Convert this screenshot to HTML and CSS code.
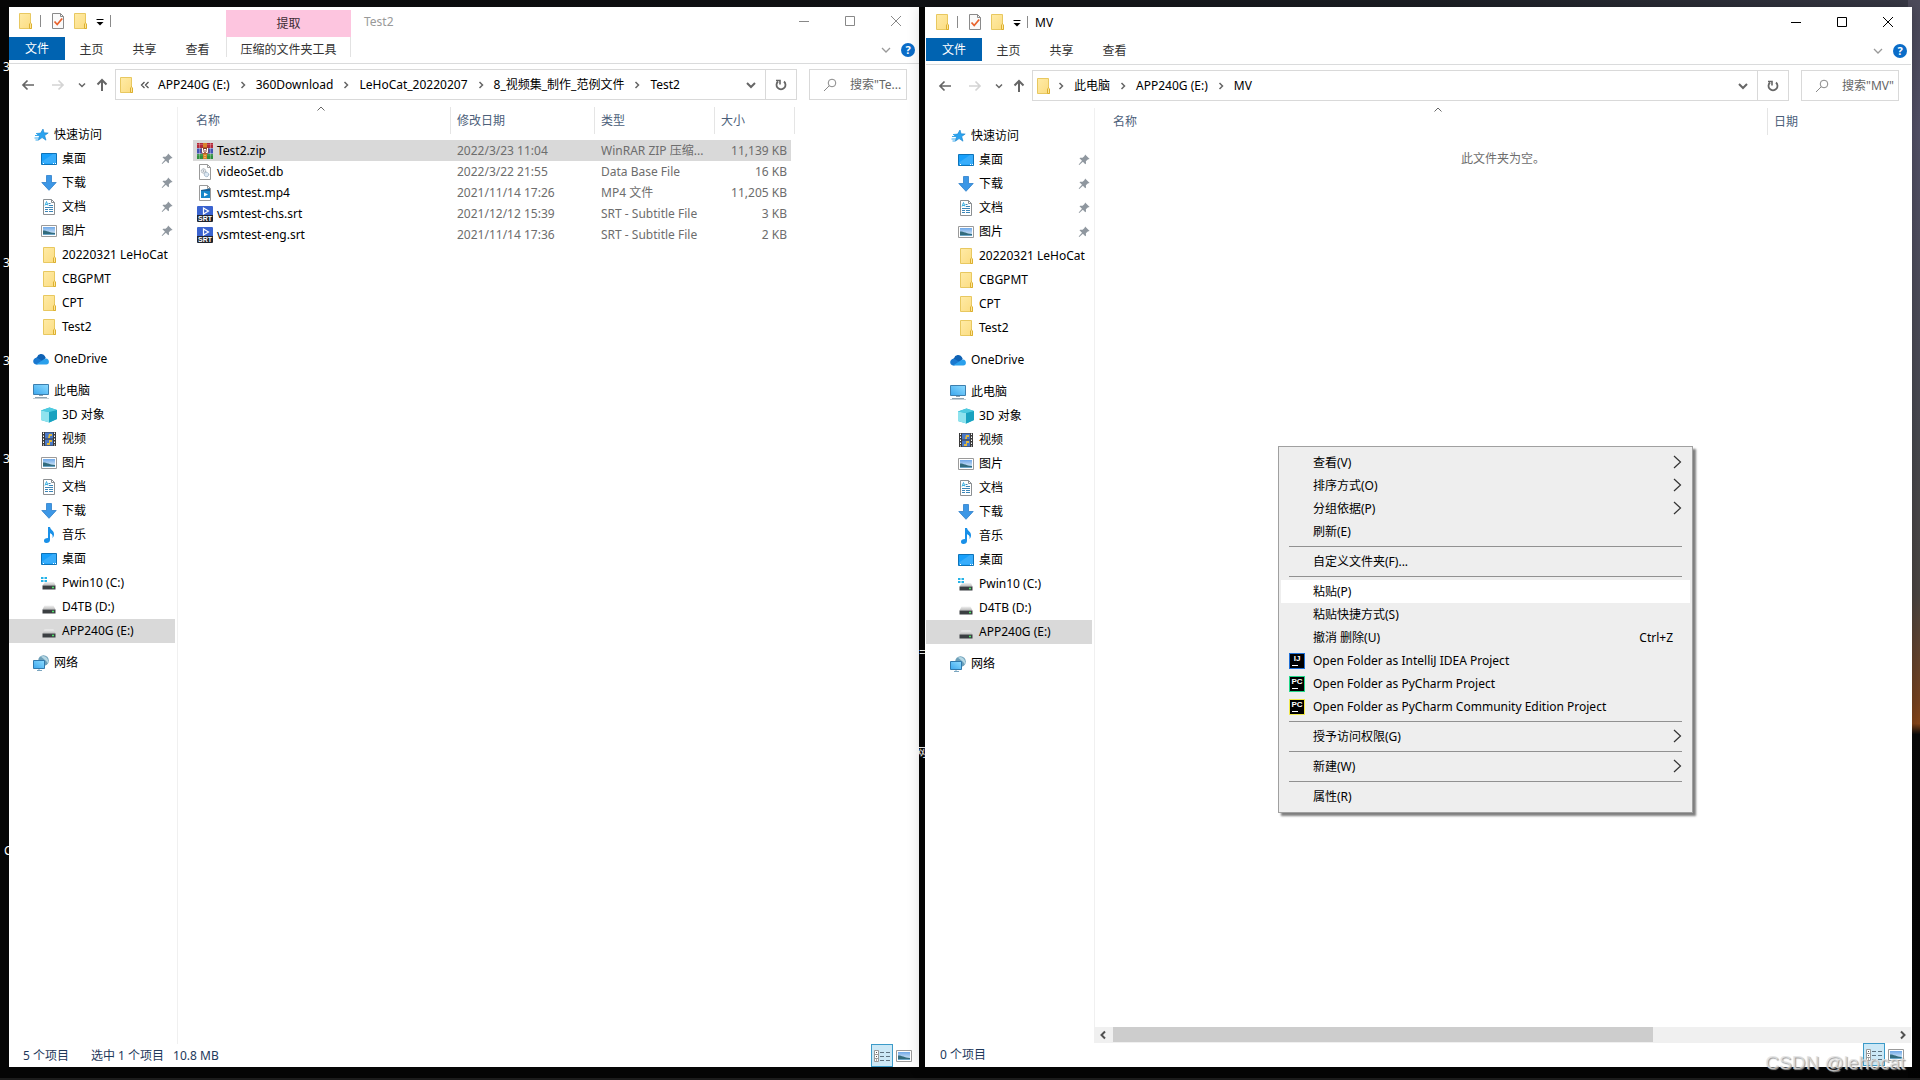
FILE: index.html
```html
<!DOCTYPE html>
<html lang="zh-CN">
<head>
    <meta charset="UTF-8">
    <meta name="viewport" content="width=device-width, initial-scale=1.0">
    <title>文件资源管理器</title>
    <link rel="stylesheet" href="styles.css">
</head>
<body>
    <!-- shared icons -->
    <svg class="sprite" width="0" height="0" aria-hidden="true">
        <defs>
            <linearGradient id="gFolder" x1="0" y1="0" x2="1" y2="1"><stop offset="0" stop-color="#ffeba6"/><stop offset="1" stop-color="#fbdc81"/></linearGradient>
            <linearGradient id="gScreen" x1="0" y1="1" x2="1" y2="0"><stop offset="0" stop-color="#3ba7ee"/><stop offset="1" stop-color="#8fdcff"/></linearGradient>
            <linearGradient id="gSky" x1="0" y1="0" x2="0" y2="1"><stop offset="0" stop-color="#6fa8e8"/><stop offset="1" stop-color="#e9f4fb"/></linearGradient>
            <linearGradient id="gDrive" x1="0" y1="0" x2="0" y2="1"><stop offset="0" stop-color="#f2f2f2"/><stop offset="1" stop-color="#b9b9b9"/></linearGradient>
        </defs>
        <symbol id="folder" viewBox="0 0 16 16"><path d="M2.500.5h11v11.200l1 .3v3.500h-12z" fill="url(#gFolder)" stroke="#e8c860"/><path d="M12.500 15.500v-4.700l1-.9 1 .9v4.700z" fill="#ffe69a" stroke="#dcb030"/></symbol>
        <symbol id="check" viewBox="0 0 16 16"><path d="M2.500.5h8l3 3v12h-11z" fill="#fafafa" stroke="#8a8a8a"/><path d="M10.500.5v3h3" fill="none" stroke="#8a8a8a"/><path d="M4.500 8.500l2.700 3 5-6" fill="none" stroke="#e8622c" stroke-width="1.800"/></symbol>
        <symbol id="star" viewBox="0 0 16 16"><path d="M10 2l1.100 3.800 4.100.2-3.500 2.600 1.300 4.600-3.900-2.600-3.800 2.600 1.200-4.300L3.300 6.500l4.300-.4z" fill="#2ba3ef" stroke="#1681cb" stroke-width=".6"/><path d="M3 6.500h3M2 8.500h4M1.500 11h4.500M2.500 13h2.500" stroke="#39a9ec"/></symbol>
        <symbol id="desktop" viewBox="0 0 16 16"><path d="M.5 2.500h15v11h-15z" fill="#18a0fb" stroke="#0e73b8"/><path d="M1 10.500L12 3h3v9.500H1z" fill="#38adfb"/><path d="M2 12.500h1M12 12.500h1M14 12.500h1" stroke="#fff"/></symbol>
        <symbol id="download" viewBox="0 0 16 16"><path d="M5.500.5h5v7h4.700L8 15.300.8 7.500h4.700z" fill="#3c97e6" stroke="#2d7fca" stroke-width=".8"/></symbol>
        <symbol id="doc" viewBox="0 0 16 16"><path d="M2.500.5h8l3 3v12h-11z" fill="#fff" stroke="#8b8f92"/><path d="M10.500.5v3h3" fill="none" stroke="#8b8f92"/><path d="M4 8.500h8M4 10.500h3M8 10.500h4M4 12.500h3M8 12.500h4M8 6.500h4" stroke="#3c86b8"/><path d="M4 6.500l1.500-4 1.500 4M4.500 5.500h2" fill="none" stroke="#38aee0"/><path d="M7.500 4.500h2" stroke="#3c86b8"/></symbol>
        <symbol id="picture" viewBox="0 0 16 16"><path d="M.5 2.500h15v11h-15z" fill="#fff" stroke="#9a9a9a"/><path d="M2 4h12v8H2z" fill="url(#gSky)"/><path d="M2 7.500c4 0 6 2 12 2.500v2H2z" fill="#336c7d"/><path d="M2 11h12v1H2z" fill="#6ba6c8"/></symbol>
        <symbol id="pin" viewBox="0 0 16 16"><path d="M9.500.5l6 6-1.500.6-1 .2-2.500 2.500.2 3-1 .8-3.200-3.200L1.700 14.500l-.8-.6 4.400-4.900L2 5.800 2.800 5l3.300.1L8.700 2.500z" fill="#8f979f"/></symbol>
        <symbol id="onedrive" viewBox="0 0 16 16"><path d="M4 6.200A4.300 4.300 0 0 1 11.800 5l1 2L8 12H3.500A3.200 3.200 0 0 1 4 6.200z" fill="#0f62b5"/><path d="M.2 10A3.200 3.200 0 0 1 4.500 7l6 3.500L4 13.400H3A3.300 3.300 0 0 1 .2 10z" fill="#1a78cf"/><path d="M3 13.400l8-5.200c2.500-1.800 5-.1 4.900 2.500a2.700 2.700 0 0 1-2.800 2.700z" fill="#2aa0ec"/></symbol>
        <symbol id="pc" viewBox="0 0 16 16"><path d="M.5 1.500h15v10H.5z" fill="url(#gScreen)" stroke="#3d7fae"/><path d="M6 12.500h4" stroke="#8fa3b0"/><path d="M2 14.500h12" stroke="#8fa3b0"/><path d="M0 15.500h16" stroke="#c5ced4"/></symbol>
        <symbol id="cube" viewBox="0 0 16 16"><path d="M0 3.500L8.500.5 16 3v9l-7.500 3.500L0 13z" fill="#24b4cf"/><path d="M0 3.500l8 1.500v10.500L0 13z" fill="#8fe3ee"/><path d="M8 5l8-2v9l-8 3.500z" fill="#19a2c0"/><path d="M0 3.500L8.500.5 16 3 8 5z" fill="#4ecbe0"/></symbol>
        <symbol id="video" viewBox="0 0 16 16"><path d="M1 1h14v14H1z" fill="#3a3a3a"/><path d="M4 1.500h8v6H4z" fill="#4a79c9"/><path d="M4 8.500h8v6H4z" fill="#4a79c9"/><path d="M8 3h3v2H9v2H7zM8 9h3v2H9v3H6v-2h2z" fill="#e3b93c"/><path d="M2.500 1.500v13M13.500 1.500v13" stroke="#fff" stroke-dasharray="1.500 1.500"/></symbol>
        <symbol id="music" viewBox="0 0 16 16"><path d="M7 0h2c.5 3 4.300 3.500 4 7.500 0 1.500-.6 2.600-1.600 3.700.9-3-.4-4.300-2.400-5V13c0 1.700-1.500 3-3.600 3S3 15 3 13.600 4.400 11 7 11z" fill="#1990e8"/></symbol>
        <symbol id="drive" viewBox="0 0 16 16"><path d="M3.500 6.500h9l2 4h-13z" fill="url(#gDrive)"/><path d="M1.500 10.500h13v4h-13z" fill="#3b3f42"/><path d="M11 12.500h2" stroke="#4fe36a" stroke-width="1.500"/></symbol>
        <symbol id="windrive" viewBox="0 0 16 16"><path d="M4 7h9l1.500 3.500h-13z" fill="url(#gDrive)"/><path d="M1.500 10.500h13v4h-13z" fill="#3b3f42"/><path d="M11 12.500h2" stroke="#4fe36a" stroke-width="1.500"/><path d="M0 2h2.500v2H0zM3.500 2H6v2H3.500zM0 5h2.500v2H0zM3.500 5H6v2H3.500z" fill="#24b3e8"/></symbol>
        <symbol id="network" viewBox="0 0 16 16"><circle cx="10.500" cy="5.500" r="5.300" fill="#6c9fb8"/><path d="M7 2c3 0 3 2 5 3s2 3 3 3c1-4-2-7-5-7z" fill="#b5d7e4"/><path d="M.5 5.500h11v8H.5z" fill="url(#gScreen)" stroke="#3079ad"/><path d="M4 15.500h5M6 14v1" stroke="#7ba6c0"/></symbol>
        <symbol id="rar" viewBox="0 0 16 16"><path d="M0 0h16v5H0z" fill="#b52a3a"/><path d="M0 5.500h16v5H0z" fill="#4353b5"/><path d="M0 11h16v5H0z" fill="#2f8f3d"/><path d="M0 1.500h16M0 12h16" stroke="#fff" stroke-opacity=".2"/><path d="M2.500 0v16M13.500 0v16" stroke="#fff" stroke-opacity=".3"/><path d="M6 0h4v16H6z" fill="#d8832c"/><path d="M4.500 4.500h7v6h-7z" fill="#8a3b26"/><path d="M5.500 5v4.500h1.500V6.500h2v3h1.500V5" fill="none" stroke="#fff"/><path d="M8 12v3" stroke="#ffe08a" stroke-dasharray="1 1"/></symbol>
        <symbol id="db" viewBox="0 0 16 16"><path d="M2.500.5h8l3 3v12h-11z" fill="#fff" stroke="#9a9a9a"/><path d="M10.500.5v3h3" fill="none" stroke="#9a9a9a"/><circle cx="6.500" cy="7" r="2.200" fill="#e9edf0" stroke="#8d979f" stroke-dasharray="1 .5"/><circle cx="6.500" cy="7" r=".7" fill="#8d979f"/><circle cx="9.500" cy="10.500" r="2.200" fill="#dbe7f2" stroke="#8ba4ba" stroke-dasharray="1 .5"/></symbol>
        <symbol id="mp4" viewBox="0 0 16 16"><path d="M2.500.5h8l3 3v12h-11z" fill="#fff" stroke="#9a9a9a"/><path d="M10.500.5v3h3" fill="none" stroke="#9a9a9a"/><path d="M4 5l9-1.500V6H4z" fill="#1b5f93"/><path d="M4 6h9v7H4z" fill="#1787c9"/><path d="M7 7.500l4 2-4 2z" fill="#fff"/></symbol>
        <symbol id="play" viewBox="0 0 8 8"><path d="M1.500 1l5 3-5 3z" fill="none" stroke="#fff" stroke-width="1.200"/></symbol>
        <symbol id="details" viewBox="0 0 16 16"><path d="M.5 2.500h4v11h-4zM.5 6.500h4M.5 10.500h4" fill="#fff" stroke="#9a9a9a"/><path d="M2 4.500h1M2 8.500h1M2 12h1" stroke="#555"/><path d="M6 4.500h4M12 4.500h4M6 8.500h4M12 8.500h4M6 12.500h4M12 12.500h4" stroke="#5e7280"/></symbol>
        <symbol id="back" viewBox="0 0 16 16"><path d="M14 8H3M7.500 3.500L3 8l4.500 4.500" fill="none" stroke="currentColor" stroke-width="1.700"/></symbol>
        <symbol id="forward" viewBox="0 0 16 16"><path d="M2 8h11M8.500 3.500L13 8l-4.500 4.500" fill="none" stroke="currentColor" stroke-width="1.700"/></symbol>
        <symbol id="up" viewBox="0 0 16 16"><path d="M8 14V3M3.500 7.500L8 3l4.500 4.500" fill="none" stroke="currentColor" stroke-width="2"/></symbol>
        <symbol id="down" viewBox="0 0 16 16"><path d="M4 6l4 4 4-4" fill="none" stroke="currentColor" stroke-width="2"/></symbol>
        <symbol id="thindown" viewBox="0 0 16 16"><path d="M4 6l4 4 4-4" fill="none" stroke="currentColor" stroke-width="1.300"/></symbol>
        <symbol id="smalldown" viewBox="0 0 16 16"><path d="M5 6.500l3 3 3-3" fill="none" stroke="currentColor" stroke-width="1.500"/></symbol>
        <symbol id="right" viewBox="0 0 16 16"><path d="M6.500 5l3 3-3 3" fill="none" stroke="currentColor" stroke-width="1.500"/></symbol>
        <symbol id="left" viewBox="0 0 16 16"><path d="M10 4.500L6.500 8l3.500 3.500" fill="none" stroke="currentColor" stroke-width="2"/></symbol>
        <symbol id="next" viewBox="0 0 16 16"><path d="M6 4.500L9.500 8 6 11.500" fill="none" stroke="currentColor" stroke-width="2"/></symbol>
        <symbol id="more" viewBox="0 0 16 16"><path d="M7.500 5l-3 3 3 3M11.500 5l-3 3 3 3" fill="none" stroke="currentColor" stroke-width="1.300"/></symbol>
        <symbol id="refresh" viewBox="0 0 16 16"><path d="M11 4.500a4.500 4.500 0 1 1-6 0" fill="none" stroke="currentColor" stroke-width="1.800"/><path d="M3 3.500h4v4" fill="none" stroke="currentColor" stroke-width="1.600"/></symbol>
        <symbol id="search" viewBox="0 0 16 16"><circle cx="10" cy="6" r="3.800" fill="none" stroke="currentColor"/><path d="M7.200 8.800L2 14" stroke="currentColor"/></symbol>
        <symbol id="qat" viewBox="0 0 16 16"><path d="M4.500 6.500h7" stroke="#000"/><path d="M4.500 9h7L8 12.500z" fill="#000"/></symbol>
        <symbol id="sort" viewBox="0 0 16 16"><path d="M4.500 9.500L8 6l3.500 3.500" fill="none" stroke="currentColor"/></symbol>
        <symbol id="min" viewBox="0 0 16 16"><path d="M3 8.500h10" stroke="currentColor"/></symbol>
        <symbol id="max" viewBox="0 0 16 16"><path d="M3.500 3.500h9v9h-9z" fill="none" stroke="currentColor"/></symbol>
        <symbol id="close" viewBox="0 0 16 16"><path d="M3 3l10 10M13 3L3 13" stroke="currentColor"/></symbol>
        <symbol id="submenu" viewBox="0 0 16 16"><path d="M6 1l6.500 6L6 13" fill="none" stroke="currentColor" stroke-width="1.200"/></symbol>
    </svg>

    <!-- desktop icon labels that peek out behind the windows -->
    <div class="desktop-labels" aria-hidden="true">
        <span class="label label-1">3</span>
        <span class="label label-2">3</span>
        <span class="label label-3">3</span>
        <span class="label label-4">3</span>
        <span class="label label-5">C</span>
        <span class="label label-6">=</span>
        <span class="label label-7">网</span>
    </div>

    <main class="desktop">
        <section class="window inactive">
            <header class="titlebar">
                <div class="quick-bar">
                    <svg class="icon"><use href="#folder"/></svg>
                    <span class="bar"></span>
                    <button aria-label="属性"><svg class="icon"><use href="#check"/></svg></button>
                    <button aria-label="新建文件夹"><svg class="icon"><use href="#folder"/></svg></button>
                    <button aria-label="自定义快速访问工具栏"><svg class="icon"><use href="#qat"/></svg></button>
                    <span class="bar"></span>
                </div>
                <span class="tool-group">提取</span>
                <h1 class="title">Test2</h1>
                <div class="controls">
                    <button aria-label="最小化"><svg class="icon"><use href="#min"/></svg></button>
                    <button aria-label="最大化"><svg class="icon"><use href="#max"/></svg></button>
                    <button aria-label="关闭"><svg class="icon"><use href="#close"/></svg></button>
                </div>
            </header>
            <div class="ribbon">
                <button class="tab file">文件</button>
                <button class="tab">主页</button>
                <button class="tab">共享</button>
                <button class="tab">查看</button>
                <button class="tab tool">压缩的文件夹工具</button>
                <button class="expand" aria-label="展开功能区"><svg class="icon"><use href="#thindown"/></svg></button>
                <button class="help">?</button>
            </div>
            <div class="address-row">
                <div class="history">
                    <button aria-label="返回"><svg class="icon"><use href="#back"/></svg></button>
                    <button class="disabled" aria-label="前进"><svg class="icon"><use href="#forward"/></svg></button>
                    <button class="small" aria-label="最近浏览的位置"><svg class="icon"><use href="#smalldown"/></svg></button>
                    <button aria-label="上移"><svg class="icon"><use href="#up"/></svg></button>
                </div>
                <div class="address">
                    <svg class="icon"><use href="#folder"/></svg>
                    <svg class="icon more"><use href="#more"/></svg>
                    <nav class="crumbs">
                        <a href="#">APP240G (E:)</a>
                        <svg class="icon"><use href="#right"/></svg>
                        <a href="#">360Download</a>
                        <svg class="icon"><use href="#right"/></svg>
                        <a href="#">LeHoCat_20220207</a>
                        <svg class="icon"><use href="#right"/></svg>
                        <a href="#">8_视频集_制作_范例文件</a>
                        <svg class="icon"><use href="#right"/></svg>
                        <a href="#">Test2</a>
                    </nav>
                    <button class="drop" aria-label="以前的位置"><svg class="icon"><use href="#down"/></svg></button>
                    <button class="refresh" aria-label="刷新"><svg class="icon"><use href="#refresh"/></svg></button>
                </div>
                <label class="search">
                    <svg class="icon"><use href="#search"/></svg>
                    <input type="text" aria-label="搜索" placeholder='搜索"Te...'>
                </label>
            </div>
            <div class="body">
                <nav class="tree">
                    <ul>
                        <li><a href="#" class="root"><svg class="icon"><use href="#star"/></svg>快速访问</a></li>
                        <li><a href="#"><svg class="icon"><use href="#desktop"/></svg>桌面<svg class="pin"><use href="#pin"/></svg></a></li>
                        <li><a href="#"><svg class="icon"><use href="#download"/></svg>下载<svg class="pin"><use href="#pin"/></svg></a></li>
                        <li><a href="#"><svg class="icon"><use href="#doc"/></svg>文档<svg class="pin"><use href="#pin"/></svg></a></li>
                        <li><a href="#"><svg class="icon"><use href="#picture"/></svg>图片<svg class="pin"><use href="#pin"/></svg></a></li>
                        <li><a href="#"><svg class="icon"><use href="#folder"/></svg>20220321 LeHoCat</a></li>
                        <li><a href="#"><svg class="icon"><use href="#folder"/></svg>CBGPMT</a></li>
                        <li><a href="#"><svg class="icon"><use href="#folder"/></svg>CPT</a></li>
                        <li><a href="#"><svg class="icon"><use href="#folder"/></svg>Test2</a></li>
                    </ul>
                    <ul>
                        <li><a href="#" class="root"><svg class="icon"><use href="#onedrive"/></svg>OneDrive</a></li>
                    </ul>
                    <ul>
                        <li><a href="#" class="root"><svg class="icon"><use href="#pc"/></svg>此电脑</a></li>
                        <li><a href="#"><svg class="icon"><use href="#cube"/></svg>3D 对象</a></li>
                        <li><a href="#"><svg class="icon"><use href="#video"/></svg>视频</a></li>
                        <li><a href="#"><svg class="icon"><use href="#picture"/></svg>图片</a></li>
                        <li><a href="#"><svg class="icon"><use href="#doc"/></svg>文档</a></li>
                        <li><a href="#"><svg class="icon"><use href="#download"/></svg>下载</a></li>
                        <li><a href="#"><svg class="icon"><use href="#music"/></svg>音乐</a></li>
                        <li><a href="#"><svg class="icon"><use href="#desktop"/></svg>桌面</a></li>
                        <li><a href="#"><svg class="icon"><use href="#windrive"/></svg>Pwin10 (C:)</a></li>
                        <li><a href="#"><svg class="icon"><use href="#drive"/></svg>D4TB (D:)</a></li>
                        <li><a href="#" class="selected"><svg class="icon"><use href="#drive"/></svg>APP240G (E:)</a></li>
                    </ul>
                    <ul>
                        <li><a href="#" class="root"><svg class="icon"><use href="#network"/></svg>网络</a></li>
                    </ul>
                </nav>
                <div class="content">
                    <table class="files">
                        <colgroup><col class="col-name"><col class="col-date"><col class="col-type"><col class="col-size"></colgroup>
                        <thead>
                            <tr>
                                <th>名称<svg class="sort"><use href="#sort"/></svg></th>
                                <th>修改日期</th>
                                <th>类型</th>
                                <th>大小</th>
                            </tr>
                        </thead>
                        <tbody>
                            <tr class="selected">
                                <td><span class="name"><svg class="icon"><use href="#rar"/></svg>Test2.zip</span></td>
                                <td>2022/3/23 11:04</td><td>WinRAR ZIP 压缩...</td><td>11,139 KB</td>
                            </tr>
                            <tr>
                                <td><span class="name"><svg class="icon"><use href="#db"/></svg>videoSet.db</span></td>
                                <td>2022/3/22 21:55</td><td>Data Base File</td><td>16 KB</td>
                            </tr>
                            <tr>
                                <td><span class="name"><svg class="icon"><use href="#mp4"/></svg>vsmtest.mp4</span></td>
                                <td>2021/11/14 17:26</td><td>MP4 文件</td><td>11,205 KB</td>
                            </tr>
                            <tr>
                                <td><span class="name"><span class="srt"><svg><use href="#play"/></svg>SRT</span>vsmtest-chs.srt</span></td>
                                <td>2021/12/12 15:39</td><td>SRT - Subtitle File</td><td>3 KB</td>
                            </tr>
                            <tr>
                                <td><span class="name"><span class="srt"><svg><use href="#play"/></svg>SRT</span>vsmtest-eng.srt</span></td>
                                <td>2021/11/14 17:36</td><td>SRT - Subtitle File</td><td>2 KB</td>
                            </tr>
                        </tbody>
                    </table>
                </div>
            </div>
            <footer class="status">
                <span class="count">5 个项目</span>
                <span class="count">选中 1 个项目</span>
                <span class="count">10.8 MB</span>
                <div class="views">
                    <button class="active" aria-label="详细信息"><svg class="icon"><use href="#details"/></svg></button>
                    <button aria-label="大缩略图"><svg class="icon"><use href="#picture"/></svg></button>
                </div>
            </footer>
        </section>

        <section class="window active">
            <header class="titlebar">
                <div class="quick-bar">
                    <svg class="icon"><use href="#folder"/></svg>
                    <span class="bar"></span>
                    <button aria-label="属性"><svg class="icon"><use href="#check"/></svg></button>
                    <button aria-label="新建文件夹"><svg class="icon"><use href="#folder"/></svg></button>
                    <button aria-label="自定义快速访问工具栏"><svg class="icon"><use href="#qat"/></svg></button>
                    <span class="bar"></span>
                </div>
                <h1 class="title">MV</h1>
                <div class="controls">
                    <button aria-label="最小化"><svg class="icon"><use href="#min"/></svg></button>
                    <button aria-label="最大化"><svg class="icon"><use href="#max"/></svg></button>
                    <button aria-label="关闭"><svg class="icon"><use href="#close"/></svg></button>
                </div>
            </header>
            <div class="ribbon">
                <button class="tab file">文件</button>
                <button class="tab">主页</button>
                <button class="tab">共享</button>
                <button class="tab">查看</button>
                <button class="expand" aria-label="展开功能区"><svg class="icon"><use href="#thindown"/></svg></button>
                <button class="help">?</button>
            </div>
            <div class="address-row">
                <div class="history">
                    <button aria-label="返回"><svg class="icon"><use href="#back"/></svg></button>
                    <button class="disabled" aria-label="前进"><svg class="icon"><use href="#forward"/></svg></button>
                    <button class="small" aria-label="最近浏览的位置"><svg class="icon"><use href="#smalldown"/></svg></button>
                    <button aria-label="上移"><svg class="icon"><use href="#up"/></svg></button>
                </div>
                <div class="address">
                    <svg class="icon"><use href="#folder"/></svg>
                    <nav class="crumbs">
                        <svg class="icon"><use href="#right"/></svg>
                        <a href="#">此电脑</a>
                        <svg class="icon"><use href="#right"/></svg>
                        <a href="#">APP240G (E:)</a>
                        <svg class="icon"><use href="#right"/></svg>
                        <a href="#">MV</a>
                    </nav>
                    <button class="drop" aria-label="以前的位置"><svg class="icon"><use href="#down"/></svg></button>
                    <button class="refresh" aria-label="刷新"><svg class="icon"><use href="#refresh"/></svg></button>
                </div>
                <label class="search">
                    <svg class="icon"><use href="#search"/></svg>
                    <input type="text" aria-label="搜索" placeholder='搜索"MV"'>
                </label>
            </div>
            <div class="body">
                <nav class="tree">
                    <ul>
                        <li><a href="#" class="root"><svg class="icon"><use href="#star"/></svg>快速访问</a></li>
                        <li><a href="#"><svg class="icon"><use href="#desktop"/></svg>桌面<svg class="pin"><use href="#pin"/></svg></a></li>
                        <li><a href="#"><svg class="icon"><use href="#download"/></svg>下载<svg class="pin"><use href="#pin"/></svg></a></li>
                        <li><a href="#"><svg class="icon"><use href="#doc"/></svg>文档<svg class="pin"><use href="#pin"/></svg></a></li>
                        <li><a href="#"><svg class="icon"><use href="#picture"/></svg>图片<svg class="pin"><use href="#pin"/></svg></a></li>
                        <li><a href="#"><svg class="icon"><use href="#folder"/></svg>20220321 LeHoCat</a></li>
                        <li><a href="#"><svg class="icon"><use href="#folder"/></svg>CBGPMT</a></li>
                        <li><a href="#"><svg class="icon"><use href="#folder"/></svg>CPT</a></li>
                        <li><a href="#"><svg class="icon"><use href="#folder"/></svg>Test2</a></li>
                    </ul>
                    <ul>
                        <li><a href="#" class="root"><svg class="icon"><use href="#onedrive"/></svg>OneDrive</a></li>
                    </ul>
                    <ul>
                        <li><a href="#" class="root"><svg class="icon"><use href="#pc"/></svg>此电脑</a></li>
                        <li><a href="#"><svg class="icon"><use href="#cube"/></svg>3D 对象</a></li>
                        <li><a href="#"><svg class="icon"><use href="#video"/></svg>视频</a></li>
                        <li><a href="#"><svg class="icon"><use href="#picture"/></svg>图片</a></li>
                        <li><a href="#"><svg class="icon"><use href="#doc"/></svg>文档</a></li>
                        <li><a href="#"><svg class="icon"><use href="#download"/></svg>下载</a></li>
                        <li><a href="#"><svg class="icon"><use href="#music"/></svg>音乐</a></li>
                        <li><a href="#"><svg class="icon"><use href="#desktop"/></svg>桌面</a></li>
                        <li><a href="#"><svg class="icon"><use href="#windrive"/></svg>Pwin10 (C:)</a></li>
                        <li><a href="#"><svg class="icon"><use href="#drive"/></svg>D4TB (D:)</a></li>
                        <li><a href="#" class="selected"><svg class="icon"><use href="#drive"/></svg>APP240G (E:)</a></li>
                    </ul>
                    <ul>
                        <li><a href="#" class="root"><svg class="icon"><use href="#network"/></svg>网络</a></li>
                    </ul>
                </nav>
                <div class="content">
                    <table class="files wide">
                        <colgroup><col><col class="col-date"></colgroup>
                        <thead>
                            <tr>
                                <th>名称<svg class="sort"><use href="#sort"/></svg></th>
                                <th>日期</th>
                            </tr>
                        </thead>
                    </table>
                    <p class="empty">此文件夹为空。</p>
                    <div class="scrollbar">
                        <button aria-label="向左滚动"><svg class="icon"><use href="#left"/></svg></button>
                        <div class="track"><div class="thumb"></div></div>
                        <button aria-label="向右滚动"><svg class="icon"><use href="#next"/></svg></button>
                    </div>
                </div>
            </div>
            <footer class="status">
                <span class="count">0 个项目</span>
                <div class="views">
                    <button class="active" aria-label="详细信息"><svg class="icon"><use href="#details"/></svg></button>
                    <button aria-label="大缩略图"><svg class="icon"><use href="#picture"/></svg></button>
                </div>
            </footer>
        </section>
    </main>

    <div class="context-menu" role="menu">
        <button role="menuitem">查看(V)<svg class="icon arrow"><use href="#submenu"/></svg></button>
        <button role="menuitem">排序方式(O)<svg class="icon arrow"><use href="#submenu"/></svg></button>
        <button role="menuitem">分组依据(P)<svg class="icon arrow"><use href="#submenu"/></svg></button>
        <button role="menuitem">刷新(E)</button>
        <hr>
        <button role="menuitem">自定义文件夹(F)...</button>
        <hr>
        <button role="menuitem" class="hover">粘贴(P)</button>
        <button role="menuitem">粘贴快捷方式(S)</button>
        <button role="menuitem">撤消 删除(U)<span class="shortcut">Ctrl+Z</span></button>
        <button role="menuitem" class="with-icon"><span class="app idea">IJ</span>Open Folder as IntelliJ IDEA Project</button>
        <button role="menuitem" class="with-icon"><span class="app pycharm">PC</span>Open Folder as PyCharm Project</button>
        <button role="menuitem" class="with-icon"><span class="app community">PC</span>Open Folder as PyCharm Community Edition Project</button>
        <hr>
        <button role="menuitem">授予访问权限(G)<svg class="icon arrow"><use href="#submenu"/></svg></button>
        <hr>
        <button role="menuitem">新建(W)<svg class="icon arrow"><use href="#submenu"/></svg></button>
        <hr>
        <button role="menuitem">属性(R)</button>
    </div>

    <div class="watermark">CSDN @lehocat</div>
</body>
</html>
```

FILE: styles.css
```css
* {
    box-sizing: border-box;
}

body {
    margin: 0;
    min-height: 100vh;
    position: relative;
    overflow: hidden;
    font-family: "Noto Sans", "Noto Sans CJK SC", sans-serif;
    font-size: 12px;
    line-height: 16px;
    color: #000;
    background:
        linear-gradient(#1c1c1c, #1c1c1c) bottom / 100% 2px no-repeat,
        linear-gradient(#4e4c5c 0, #55536a 12%, #4a4b52 40%, #4c4744 55%, #7a4420 65%, #8a4718 67%, #0a0a0a 68%, #030303 100%) right / 12px 100% no-repeat,
        linear-gradient(90deg, #060606 0, #101114 45%, #1d2026 75%, #3a3b48 100%) top / 100% 7px no-repeat,
        #050505;
}

button {
    padding: 0;
    border: 0;
    background: none;
    font: inherit;
    color: inherit;
}

a {
    color: inherit;
    text-decoration: none;
}

ul {
    margin: 0;
    padding: 0;
    list-style: none;
}

.sprite {
    position: absolute;
}

.icon {
    display: block;
    flex: none;
    width: 16px;
    height: 16px;
}

/* desktop */

.desktop {
    position: relative;
    display: grid;
    grid-template-columns: 910fr 987fr;
    gap: 6px;
    height: 100vh;
    padding: 7px 8px 13px 9px;
}

.label {
    position: absolute;
    left: 3px;
    color: #fff;
}

.label-1 { top: 59px; }
.label-2 { top: 255px; }
.label-3 { top: 353px; }
.label-4 { top: 451px; }
.label-5 { top: 843px; left: 4px; }
.label-6 { top: 645px; left: 919px; }
.label-7 { top: 745px; left: 915px; }

/* window */

.window {
    display: flex;
    flex-direction: column;
    min-width: 0;
    background: #fff;
}

.window.active {
    padding: 1px;
    box-shadow: 0 0 16px rgba(0, 0, 0, 0.3);
}

.titlebar {
    display: flex;
    height: 30px;
}

.quick-bar {
    display: flex;
    align-items: center;
    width: 103px;
    padding-left: 8px;
    margin-bottom: 2px;
}

.quick-bar .bar {
    flex: none;
    width: 1px;
    height: 12px;
    margin: 0 7px;
    background: #8a8a8a;
}

.quick-bar .bar:last-child {
    margin-right: 0;
}

.quick-bar button {
    margin-right: 6px;
}

.quick-bar button:nth-of-type(1) {
    margin-left: 2px;
}

.quick-bar button:nth-of-type(3) {
    margin: 0 -5px 0 -2px;
}

.tool-group {
    width: 125px;
    margin: 3px 0 0 114px;
    line-height: 27px;
    text-align: center;
    color: #3c2b33;
    background: #fdc5df;
}

.title {
    margin: 0 0 0 6px;
    font-size: 12px;
    font-weight: normal;
    line-height: 30px;
}

.inactive .title {
    margin-left: 13px;
    color: #999;
}

.controls {
    display: flex;
    margin-left: auto;
    color: #000;
}

.inactive .controls {
    color: #888;
}

.controls button {
    display: flex;
    align-items: center;
    justify-content: center;
    width: 46px;
    height: 28px;
}

.ribbon {
    display: flex;
    height: 27px;
    border-bottom: 1px solid #dadbdc;
}

.tab {
    width: 53px;
    height: 25px;
    color: #333;
}

.tab.file {
    width: 56px;
    height: 23px;
    color: #fff;
    background: #0063b1;
}

.tab.tool {
    width: 125px;
    height: 20px;
    margin-left: 2px;
    padding-top: 5px;
    border: 1px solid #e2e2e2;
    border-width: 0 1px;
}

.expand {
    height: 26px;
    margin-left: auto;
    color: #999;
}

.help {
    width: 14px;
    height: 14px;
    margin: 6px 4px 0 7px;
    border-radius: 50%;
    font-size: 11px;
    font-weight: bold;
    line-height: 14px;
    color: #fff;
    background: #0a6cc8;
}

.address-row {
    display: flex;
    height: 43px;
    padding: 5px 12px 7px 11px;
}

.history {
    display: flex;
    align-items: center;
    width: 95px;
    color: #666;
}

.history button {
    margin-right: 14px;
}

.history button.disabled {
    margin-right: 8px;
    color: #d4d4d4;
}

.history button.small {
    margin-right: 4px;
}

.history button:last-child {
    margin-right: 0;
}

.address {
    display: flex;
    flex: 1;
    align-items: center;
    min-width: 0;
    padding-left: 2px;
    border: 1px solid #d9d9d9;
}

.address .more {
    margin-left: 3px;
    color: #555;
}

.crumbs {
    display: flex;
    flex: 1;
    align-items: center;
    gap: 5px;
    margin-left: 2px;
    white-space: nowrap;
}

.more + .crumbs {
    margin-left: 5px;
}

.crumbs .icon {
    color: #666;
}

.drop {
    margin-right: 6px;
    color: #666;
}

.refresh {
    display: flex;
    align-items: center;
    justify-content: center;
    align-self: stretch;
    width: 31px;
    border-left: 1px solid #d9d9d9;
    color: #666;
}

.search {
    display: flex;
    align-items: center;
    gap: 12px;
    width: 98px;
    margin-left: 12px;
    padding-left: 12px;
    border: 1px solid #d9d9d9;
    color: #888;
}

.search input {
    flex: 1;
    min-width: 0;
    padding: 0;
    border: 0;
    outline: 0;
    font: inherit;
    background: none;
}

.search input::placeholder {
    color: #666;
    opacity: 1;
}

.body {
    display: flex;
    flex: 1;
    min-height: 0;
}

/* navigation pane */

.tree {
    width: 169px;
    padding-top: 16px;
    border-right: 1px solid #f0f0f0;
}

.tree ul {
    margin-bottom: 8px;
}

.tree a {
    display: flex;
    align-items: center;
    gap: 5px;
    height: 24px;
    margin-right: 2px;
    padding-left: 32px;
    white-space: nowrap;
}

.tree a.root {
    padding-left: 24px;
}

.tree a.selected {
    background: #d9d9d9;
}

.pin {
    width: 12px;
    height: 12px;
    margin: 0 2px 0 auto;
}

/* file list */

.content {
    display: flex;
    flex: 1;
    flex-direction: column;
    min-width: 0;
}

.files {
    width: 602px;
    margin-left: 15px;
    table-layout: fixed;
    border-collapse: separate;
    border-spacing: 0;
}

.files.wide {
    width: auto;
    align-self: stretch;
    table-layout: auto;
}

.wide col:first-child {
    width: 100%;
}

.col-date { width: 144px; }
.col-type { width: 120px; }
.col-size { width: 80px; }

.files th {
    position: relative;
    height: 27px;
    padding: 0 6px;
    border-right: 1px solid #e5e5e5;
    font-weight: normal;
    text-align: left;
    color: #4c607a;
}

.files th:first-child {
    padding-left: 3px;
}

.wide th:last-child {
    min-width: 143px;
    border-right: 0;
}

.files thead::after {
    content: "";
    display: block;
    height: 6px;
}

.sort {
    position: absolute;
    top: -6px;
    left: 50%;
    width: 16px;
    height: 16px;
    margin-left: -9px;
    color: #666;
}

.files td {
    height: 21px;
    padding: 0 6px;
    color: #6d6d6d;
    white-space: nowrap;
}

.files td:first-child {
    padding-left: 4px;
    color: #000;
}

.files td:last-child {
    padding-right: 4px;
    border-right: 4px solid #fff;
    text-align: right;
}

.files .selected td {
    background: #d9d9d9;
}

.name {
    display: flex;
    align-items: center;
    gap: 4px;
}

.srt {
    width: 16px;
    height: 16px;
    border-radius: 1px;
    font: bold 7px/7px "Liberation Sans", sans-serif;
    text-align: center;
    color: #fff;
    background: linear-gradient(#3a63cf 9px, #20242c 9px);
}

.srt svg {
    display: block;
    width: 8px;
    height: 8px;
    margin: 1px auto 0 5px;
}

.empty {
    flex: 1;
    margin: 10px 0 0;
    text-align: center;
    color: #6d6d6d;
}

.scrollbar {
    display: flex;
    height: 16px;
    color: #505050;
    background: #f0f0f0;
}

.scrollbar button {
    width: 18px;
}

.scrollbar button:last-child {
    width: 16px;
}

.track {
    flex: 1;
}

.thumb {
    width: 69%;
    height: 15px;
    background: #cdcdcd;
}

/* status bar */

.status {
    display: flex;
    align-items: center;
    height: 23px;
    padding: 0 7px 0 14px;
    color: #1e395b;
}

.count {
    margin-right: 22px;
}

.count + .count {
    margin-right: 9px;
}

.views {
    display: flex;
    align-items: center;
    align-self: stretch;
    gap: 3px;
    margin-left: auto;
}

.views button.active {
    display: flex;
    align-items: center;
    justify-content: center;
    align-self: stretch;
    width: 22px;
    border: 1px solid #3c9bc9;
    background: #cce8f6;
}

/* context menu */

.context-menu {
    position: absolute;
    top: 446px;
    left: 1278px;
    width: 415px;
    padding: 4px 2px;
    border: 1px solid #a0a0a0;
    background: #eee;
    box-shadow: 3px 3px 2px rgba(0, 0, 0, 0.5);
}

.context-menu button {
    display: flex;
    align-items: center;
    width: 100%;
    height: 23px;
    padding: 0 6px 0 32px;
    text-align: left;
}

.context-menu button.hover {
    background: #fff;
}

.context-menu button.with-icon {
    gap: 8px;
    padding-left: 8px;
}

.context-menu hr {
    height: 1px;
    margin: 3px 8px;
    border: 0;
    background: #919191;
}

.arrow {
    margin-left: auto;
    color: #333;
}

.shortcut {
    margin-left: auto;
    padding-right: 11px;
}

.app {
    width: 16px;
    height: 16px;
    border: 1px solid #1f6fd6;
    font: bold 8px/10px "Liberation Sans", sans-serif;
    text-align: center;
    color: #fff;
    background: linear-gradient(#fff, #fff) 2px 11px / 6px 1px no-repeat #000;
}

.app.pycharm {
    border-color: #21d789;
}

.app.community {
    border-color: #f0e84a;
}

.watermark {
    position: absolute;
    right: 15px;
    bottom: 6px;
    font-family: "Liberation Sans", sans-serif;
    font-size: 19px;
    line-height: 22px;
    color: rgba(225, 225, 225, 0.8);
    text-shadow: 1px 1px 1px #999;
}
```
